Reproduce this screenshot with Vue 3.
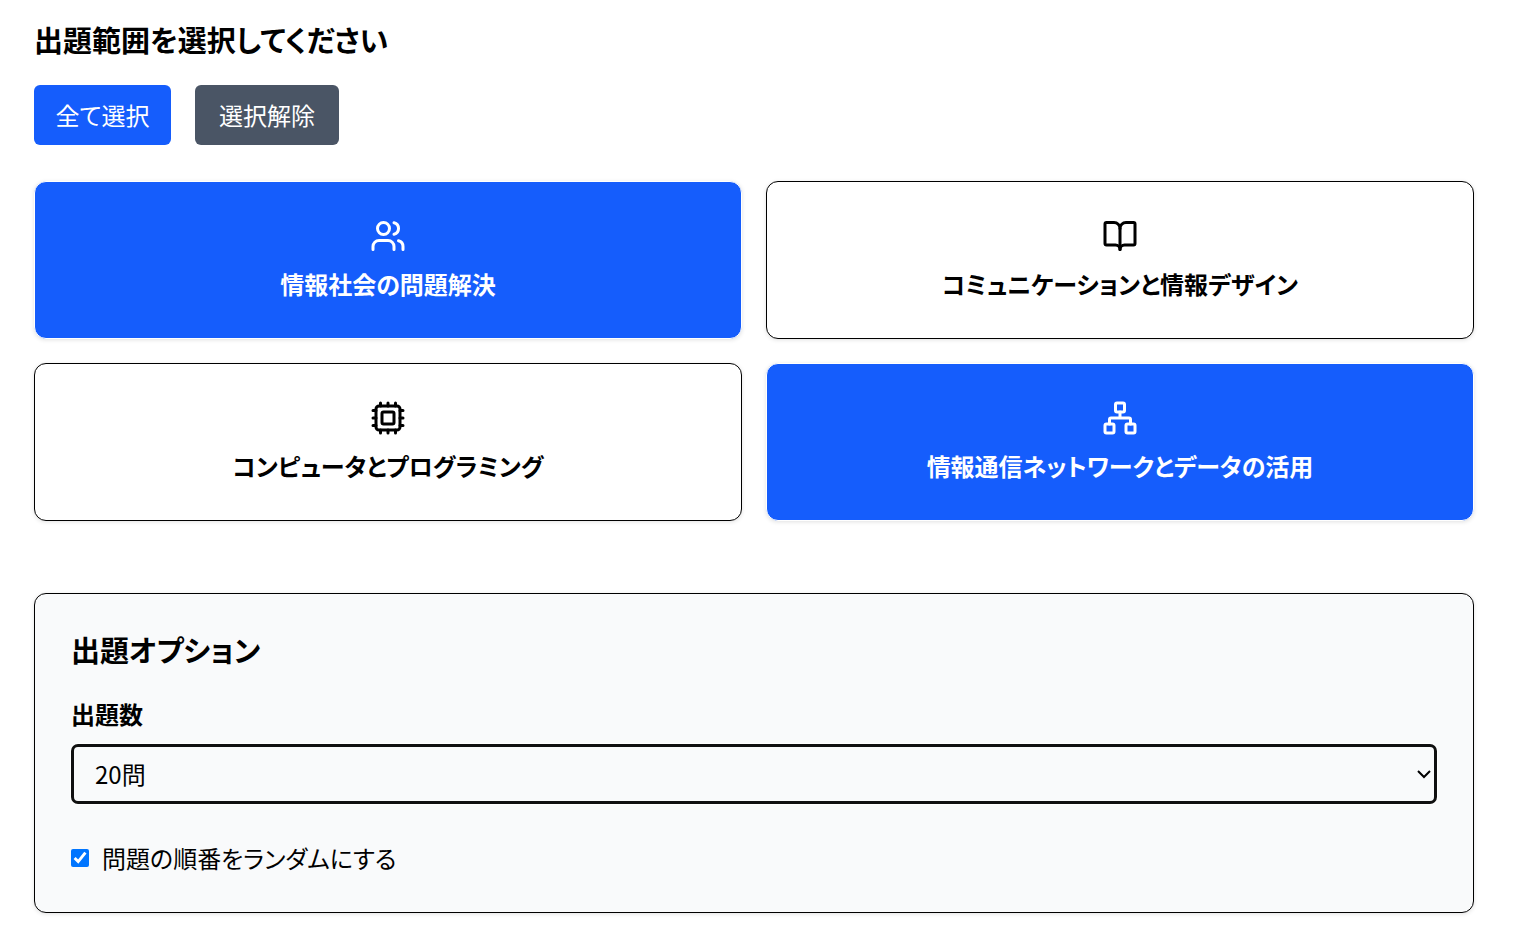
<script setup>
import { ref } from 'vue'

const topics = ref([
  { id: 'society', label: '情報社会の問題解決', selected: true },
  { id: 'design', label: 'コミュニケーションと情報デザイン', selected: false },
  { id: 'computer', label: 'コンピュータとプログラミング', selected: false },
  { id: 'network', label: '情報通信ネットワークとデータの活用', selected: true },
])
const count = ref('20')
const shuffle = ref(true)

function setAll(value) {
  topics.value.forEach((topic) => {
    topic.selected = value
  })
}
</script>

<template>
  <main class="page">
    <h2 class="title">出題範囲を選択してください</h2>
    <div class="actions">
      <button type="button" class="action primary" @click="setAll(true)">全て選択</button>
      <button type="button" class="action secondary" @click="setAll(false)">選択解除</button>
    </div>

    <div class="topics">
      <button
        v-for="topic in topics"
        :key="topic.id"
        type="button"
        class="topic"
        :class="{ selected: topic.selected }"
        :aria-pressed="topic.selected"
        @click="topic.selected = !topic.selected"
      >
        <svg class="icon" viewBox="0 0 24 24" aria-hidden="true">
          <template v-if="topic.id === 'society'">
            <path d="M16 21v-2a4 4 0 0 0-4-4H6a4 4 0 0 0-4 4v2" />
            <circle cx="9" cy="7" r="4" />
            <path d="M22 21v-2a4 4 0 0 0-3-3.87" />
            <path d="M16 3.13a4 4 0 0 1 0 7.75" />
          </template>
          <template v-else-if="topic.id === 'design'">
            <path d="M12 7v14" />
            <path d="M3 18a1 1 0 0 1-1-1V4a1 1 0 0 1 1-1h5a4 4 0 0 1 4 4 4 4 0 0 1 4-4h5a1 1 0 0 1 1 1v13a1 1 0 0 1-1 1h-6a3 3 0 0 0-3 3 3 3 0 0 0-3-3z" />
          </template>
          <template v-else-if="topic.id === 'computer'">
            <rect x="4" y="4" width="16" height="16" rx="2" />
            <rect x="8" y="8" width="8" height="8" rx="1" />
            <path d="M12 20v2M12 2v2M17 20v2M17 2v2M2 12h2M2 17h2M2 7h2M20 12h2M20 17h2M20 7h2M7 20v2M7 2v2" />
          </template>
          <template v-else>
            <rect x="16" y="16" width="6" height="6" rx="1" />
            <rect x="2" y="16" width="6" height="6" rx="1" />
            <rect x="9" y="2" width="6" height="6" rx="1" />
            <path d="M5 16v-3a1 1 0 0 1 1-1h12a1 1 0 0 1 1 1v3M12 12V8" />
          </template>
        </svg>
        <span class="topic-label">{{ topic.label }}</span>
      </button>
    </div>

    <section class="options">
      <h3 class="title">出題オプション</h3>
      <label class="field-label" for="count">出題数</label>
      <div class="select-wrap">
        <select id="count" v-model="count" class="select">
          <option value="10">10問</option>
          <option value="20">20問</option>
          <option value="30">30問</option>
        </select>
        <svg class="chevron" viewBox="0 0 16 16" aria-hidden="true">
          <path d="M2 5l6 6 6-6" />
        </svg>
      </div>
      <div class="check-row">
        <input id="shuffle" v-model="shuffle" type="checkbox" class="check" />
        <label for="shuffle">問題の順番をランダムにする</label>
      </div>
    </section>
  </main>
</template>

<style>
body {
  margin: 0;
  background: #fff;
}
</style>

<style scoped>
.page {
  box-sizing: border-box;
  padding: 20px 40px 30px 34px;
  font-family: 'Noto Sans CJK JP', sans-serif;
  font-size: 24px;
  line-height: 36px;
  font-feature-settings: 'palt' 1;
  color: #000;
}
.title {
  margin: 0;
  font-size: 29px;
  line-height: 38px;
  font-weight: 700;
}
button,
select {
  font: inherit;
  font-feature-settings: inherit;
  color: inherit;
}
.actions {
  display: flex;
  gap: 24px;
  margin: 27px 0 36px;
}
.action {
  padding: 12px 0;
  border: 0;
  border-radius: 6px;
  color: #fff;
}
.primary {
  width: 137px;
  background: #155dfc;
}
.secondary {
  width: 144px;
  background: #4a5565;
}
.topics {
  display: grid;
  grid-template-columns: 1fr 1fr;
  gap: 24px;
}
.topic {
  display: flex;
  flex-direction: column;
  align-items: center;
  gap: 12px;
  padding: 36px;
  border: 1px solid #000;
  border-radius: 12px;
  background: #fff;
  box-shadow: 0 1px 4px rgba(0, 0, 0, 0.12);
  font-weight: 700;
}
.topic.selected {
  border-color: #fff;
  background: #155dfc;
  color: #fff;
}
.icon {
  width: 36px;
  height: 36px;
  fill: none;
  stroke: currentColor;
  stroke-width: 2;
  stroke-linecap: round;
  stroke-linejoin: round;
}
.options {
  margin-top: 72px;
  padding: 36px;
  border: 1px solid #000;
  border-radius: 12px;
  background: #f9fafb;
  box-shadow: 0 1px 4px rgba(0, 0, 0, 0.12);
}
.field-label {
  display: block;
  margin: 28px 0 12px;
  font-weight: 700;
}
.select-wrap {
  display: grid;
  align-items: center;
}
.select {
  grid-area: 1 / 1;
  width: 100%;
  height: 60px;
  padding: 0 21px;
  border: 3px solid #101010;
  border-radius: 7px;
  background: #f9fafb;
  box-shadow: 0 0 0 1px #fff;
  appearance: none;
}
.chevron {
  grid-area: 1 / 1;
  justify-self: end;
  width: 16px;
  height: 16px;
  margin-right: 5px;
  fill: none;
  stroke: #000;
  stroke-width: 2;
  pointer-events: none;
}
.check-row {
  display: flex;
  align-items: center;
  gap: 13px;
  margin-top: 36px;
}
.check {
  width: 18px;
  height: 18px;
  margin: 0;
  accent-color: #0075ff;
}
</style>
